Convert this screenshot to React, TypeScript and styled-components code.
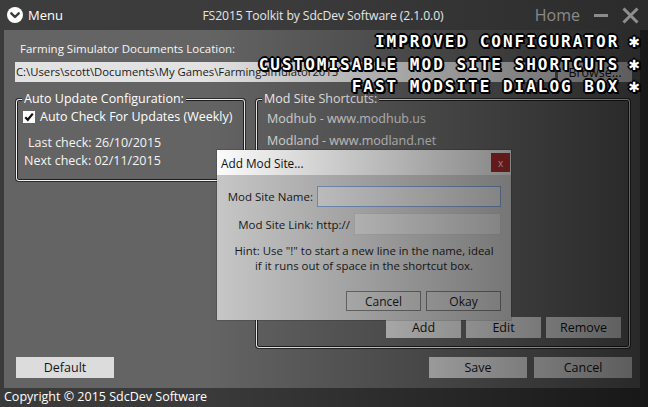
import React from 'react';
import styled, { createGlobalStyle } from 'styled-components';

const GlobalStyle = createGlobalStyle`
  html, body { margin: 0; padding: 0; background: #2b2b2b; overflow: hidden; }
  * { box-sizing: border-box; }
`;

const UI = `"Open Sans", "Noto Sans", sans-serif`;

const Window = styled.div`
  position: relative;
  width: 648px;
  height: 407px;
  display: flex;
  flex-direction: column;
  background: #3a3a3a;
  font-family: ${UI};
  overflow: hidden;
`;

const TitleBar = styled.header`
  height: 30px;
  flex: none;
  display: grid;
  grid-template-columns: 1fr auto 1fr;
  align-items: center;
  padding: 0 9px 0 7px;
  background: linear-gradient(90deg, #3d3d3d 0%, #3b3b3b 45%, #2b2b2b 100%);
`;

const MenuButton = styled.div`
  display: flex;
  align-items: center;
  gap: 5px;
  color: #ffffff;
  font-size: 13px;
`;

const AppTitle = styled.div`
  color: #e6e6e6;
  font-size: 12.2px;
  letter-spacing: -0.1px;
`;

const WinControls = styled.div`
  display: flex;
  justify-content: flex-end;
  align-items: center;
  gap: 14px;
`;

const HomeLink = styled.span`
  color: #8a8a8a;
  font-size: 16px;
  margin-right: 0px;
`;

const Body = styled.div`
  flex: 1;
  display: flex;
`;

const Main = styled.main`
  margin-left: 4px;
  width: 636px;
  background: #646464;
  display: flex;
  flex-direction: column;
  padding: 11px 8px 10px 11px;
`;

const FieldLabel = styled.div`
  color: #f6f6f6;
  font-size: 11.5px;
  line-height: 16px;
  padding-left: 5px;
`;

const PathRow = styled.div`
  margin-top: 5px;
  height: 20px;
  display: flex;
  gap: 3px;
`;

const PathBox = styled.div`
  flex: 1;
  background: #e2e2e2;
  color: #1a1a1a;
  font-size: 11.3px;
  line-height: 20px;
  padding-left: 1px;
  white-space: nowrap;
  overflow: hidden;
`;

const Button = styled.div<{ $w: number; $h?: number }>`
  width: ${(p) => p.$w}px;
  height: ${(p) => p.$h ?? 21}px;
  flex: none;
  background: #dcdcdc;
  color: #141414;
  font-size: 12.5px;
  display: flex;
  align-items: center;
  justify-content: center;
`;

const GroupsRow = styled.div`
  margin-top: 9px;
  margin-left: 1px;
  height: 257px;
  display: flex;
  align-items: flex-start;
  gap: 11px;
`;

const Group = styled.fieldset<{ $grow?: boolean }>`
  margin: 0;
  padding: 0;
  min-width: 0;
  width: ${(p) => (p.$grow ? 'auto' : '229px')};
  flex: ${(p) => (p.$grow ? '1' : 'none')};
  height: ${(p) => (p.$grow ? '257px' : '90px')};
  margin-right: ${(p) => (p.$grow ? '2px' : '0')};
  border: 1px solid #f4f4f4;
  border-radius: 3px;
  box-shadow: inset 0 0 0 1px #1e1e1e, 0 0 0 1px #2c2c2c;
  display: flex;
  flex-direction: column;
`;

const Legend = styled.legend`
  margin-left: 5px;
  padding: 0 2px;
  color: #ffffff;
  font-size: 12.5px;
  line-height: 16px;
  background: #646464;
`;

const GroupBody = styled.div<{ $pt: number; $pl: number }>`
  flex: 1;
  display: flex;
  flex-direction: column;
  padding: ${(p) => p.$pt}px 8px 9px ${(p) => p.$pl}px;
`;

const CheckRow = styled.div`
  display: flex;
  align-items: center;
  gap: 5px;
  color: #ffffff;
  font-size: 12.5px;
  line-height: 14px;
`;

const InfoLine = styled.div<{ $mt: number; $indent: number }>`
  margin-top: ${(p) => p.$mt}px;
  padding-left: ${(p) => p.$indent}px;
  color: #f4f4f4;
  font-size: 12.5px;
  line-height: 14px;
`;

const Shortcut = styled.div<{ $mt: number }>`
  margin-top: ${(p) => p.$mt}px;
  color: #e2e2e2;
  font-size: 12.5px;
  line-height: 14px;
`;

const ButtonRow = styled.div<{ $gap: number }>`
  margin-top: auto;
  display: flex;
  justify-content: flex-end;
  gap: ${(p) => p.$gap}px;
`;

const BottomRow = styled.div`
  margin-top: 9px;
  margin-left: 1px;
  display: flex;
  gap: 7px;
`;

const Spacer = styled.div`
  flex: 1;
`;

const Footer = styled.footer`
  height: 19px;
  flex: none;
  padding-left: 4px;
  color: #ffffff;
  font-size: 12.5px;
  line-height: 18px;
  background: #3a3a3a;
`;

/* Floating dialog */
const Dialog = styled.div`
  position: absolute;
  left: 217px;
  top: 150px;
  width: 294px;
  height: 170px;
  background: #c9c9c9;
  display: flex;
  flex-direction: column;
  box-shadow: 0 0 0 1px rgba(0, 0, 0, 0.15);
`;

const DialogTitleBar = styled.div`
  height: 25px;
  flex: none;
  display: flex;
  align-items: center;
  justify-content: space-between;
  padding: 0 1px 0 4px;
  background: linear-gradient(90deg, #ffffff 0%, #f2f2f2 60%, #e4e4e4 100%);
  color: #111111;
  font-size: 11.8px;
`;

const CloseBox = styled.div`
  width: 19px;
  height: 19px;
  background: #a42a2a;
  color: #f2d6d6;
  font-size: 10px;
  display: flex;
  align-items: center;
  justify-content: center;
  line-height: 1;
`;

const DialogBody = styled.div`
  flex: 1;
  display: flex;
  flex-direction: column;
  padding: 11px 10px 9px 10px;
`;

const FormRow = styled.div<{ $mt?: number }>`
  margin-top: ${(p) => p.$mt ?? 0}px;
  display: flex;
  justify-content: flex-end;
  align-items: center;
  gap: 4px;
  color: #1a1a1a;
  font-size: 11.5px;
  white-space: nowrap;
`;

const TextInput = styled.div<{ $w: number; $focus?: boolean; $h: number }>`
  width: ${(p) => p.$w}px;
  height: ${(p) => p.$h}px;
  flex: none;
  background: #dcdcdc;
  border: 1px solid ${(p) => (p.$focus ? '#7f9fcd' : '#c4c4c4')};
`;

const Hint = styled.p`
  margin: 8px 0 0;
  text-align: center;
  color: #1c1c1c;
  font-size: 11.4px;
  line-height: 15px;
`;

const DialogButton = styled.div`
  width: 75px;
  height: 20px;
  background: #cdcdcd;
  border: 1px solid #777777;
  color: #1a1a1a;
  font-size: 12px;
  display: flex;
  align-items: center;
  justify-content: center;
`;

const DialogButtons = styled.div`
  margin-top: auto;
  display: flex;
  justify-content: flex-end;
  gap: 5px;
`;

/* screen-wide shading lying over the window */
const Shade = styled.div`
  position: absolute;
  left: 0;
  right: 0;
  top: 30px;
  bottom: 0;
  pointer-events: none;
  background: linear-gradient(90deg, rgba(0, 0, 0, 0) 0%, rgba(0, 0, 0, 0) 32%, rgba(0, 0, 0, 0.6) 100%);
`;

/* promotional caption lying over everything */
const Promo = styled.div`
  position: absolute;
  top: 31px;
  right: 8px;
  text-align: right;
  pointer-events: none;
  font-family: "DejaVu Sans Mono", "Liberation Mono", monospace;
  font-weight: bold;
  font-size: 16px;
  line-height: 22.5px;
  letter-spacing: 2px;
  color: #ffffff;
  text-shadow: -1px -1px 0 #000, 1px -1px 0 #000, -1px 1px 0 #000, 1px 1px 0 #000,
    2px 2px 0 #000, 0 2px 0 #000, 2px 0 0 #000, -2px 0 0 #000, 0 -2px 0 #000;
  white-space: pre;
`;

const Star = styled.span`
  font-family: "DejaVu Sans", sans-serif;
  font-size: 14px;
  margin-left: 9px;
  letter-spacing: 0;
`;

const MenuIcon = () => (
  <svg width="16" height="16" viewBox="0 0 16 16">
    <circle cx="8" cy="8" r="8" fill="#ffffff" />
    <path d="M4.3 6.3 L8 10 L11.7 6.3" fill="none" stroke="#3b3b3b" strokeWidth="2.4" strokeLinecap="round" strokeLinejoin="round" />
  </svg>
);

const MinimizeIcon = () => (
  <svg width="14" height="6" viewBox="0 0 14 6">
    <rect x="0" y="2" width="14" height="3" fill="#8c8c8c" />
  </svg>
);

const CloseIcon = () => (
  <svg width="17" height="17" viewBox="0 0 17 17">
    <path d="M1.5 1.5 L15.5 15.5 M15.5 1.5 L1.5 15.5" stroke="#8e8e8e" strokeWidth="3" />
  </svg>
);

const CheckIcon = () => (
  <svg width="12" height="12" viewBox="0 0 12 12">
    <rect x="0" y="0" width="12" height="12" fill="#ffffff" />
    <path d="M2.3 6.2 L4.8 8.8 L9.8 2.6" fill="none" stroke="#111111" strokeWidth="2.2" />
  </svg>
);

export default function App() {
  return (
    <>
      <GlobalStyle />
      <Window>
        <TitleBar>
          <MenuButton>
            <MenuIcon />
            <span>Menu</span>
          </MenuButton>
          <AppTitle>FS2015 Toolkit by SdcDev Software (2.1.0.0)</AppTitle>
          <WinControls>
            <HomeLink>Home</HomeLink>
            <MinimizeIcon />
            <CloseIcon />
          </WinControls>
        </TitleBar>
        <Body>
          <Main>
            <FieldLabel>Farming Simulator Documents Location:</FieldLabel>
            <PathRow>
              <PathBox>C:\Users\scott\Documents\My Games\FarmingSimulator2015</PathBox>
              <Button $w={74} $h={20}>Browse...</Button>
            </PathRow>
            <GroupsRow>
              <Group>
                <Legend>Auto Update Configuration:</Legend>
                <GroupBody $pt={3} $pl={6}>
                  <CheckRow>
                    <CheckIcon />
                    <span>Auto Check For Updates (Weekly)</span>
                  </CheckRow>
                  <InfoLine $mt={12} $indent={5}>Last check: 26/10/2015</InfoLine>
                  <InfoLine $mt={4} $indent={1}>Next check: 02/11/2015</InfoLine>
                </GroupBody>
              </Group>
              <Group $grow>
                <Legend>Mod Site Shortcuts:</Legend>
                <GroupBody $pt={5} $pl={10}>
                  <Shortcut $mt={0}>Modhub - www.modhub.us</Shortcut>
                  <Shortcut $mt={8}>Modland - www.modland.net</Shortcut>
                  <ButtonRow $gap={5}>
                    <Button $w={75}>Add</Button>
                    <Button $w={75}>Edit</Button>
                    <Button $w={75}>Remove</Button>
                  </ButtonRow>
                </GroupBody>
              </Group>
            </GroupsRow>
            <BottomRow>
              <Button $w={98}>Default</Button>
              <Spacer />
              <Button $w={98}>Save</Button>
              <Button $w={98}>Cancel</Button>
            </BottomRow>
          </Main>
        </Body>
        <Footer>Copyright © 2015 SdcDev Software</Footer>

        <Dialog>
          <DialogTitleBar>
            <span>Add Mod Site...</span>
            <CloseBox>x</CloseBox>
          </DialogTitleBar>
          <DialogBody>
            <FormRow>
              <span>Mod Site Name:</span>
              <TextInput $w={184} $h={21} $focus />
            </FormRow>
            <FormRow $mt={6}>
              <span>Mod Site Link: http://</span>
              <TextInput $w={147} $h={22} />
            </FormRow>
            <Hint>
              Hint: Use "!" to start a new line in the name, ideal
              <br />
              if it runs out of space in the shortcut box.
            </Hint>
            <DialogButtons>
              <DialogButton>Cancel</DialogButton>
              <DialogButton>Okay</DialogButton>
            </DialogButtons>
          </DialogBody>
        </Dialog>

        <Shade />

        <Promo>
          {'IMPROVED CONFIGURATOR'}<Star>✱</Star>{'\n'}
          {'CUSTOMISABLE MOD SITE SHORTCUTS'}<Star>✱</Star>{'\n'}
          {'FAST MODSITE DIALOG BOX'}<Star>✱</Star>
        </Promo>
      </Window>
    </>
  );
}
